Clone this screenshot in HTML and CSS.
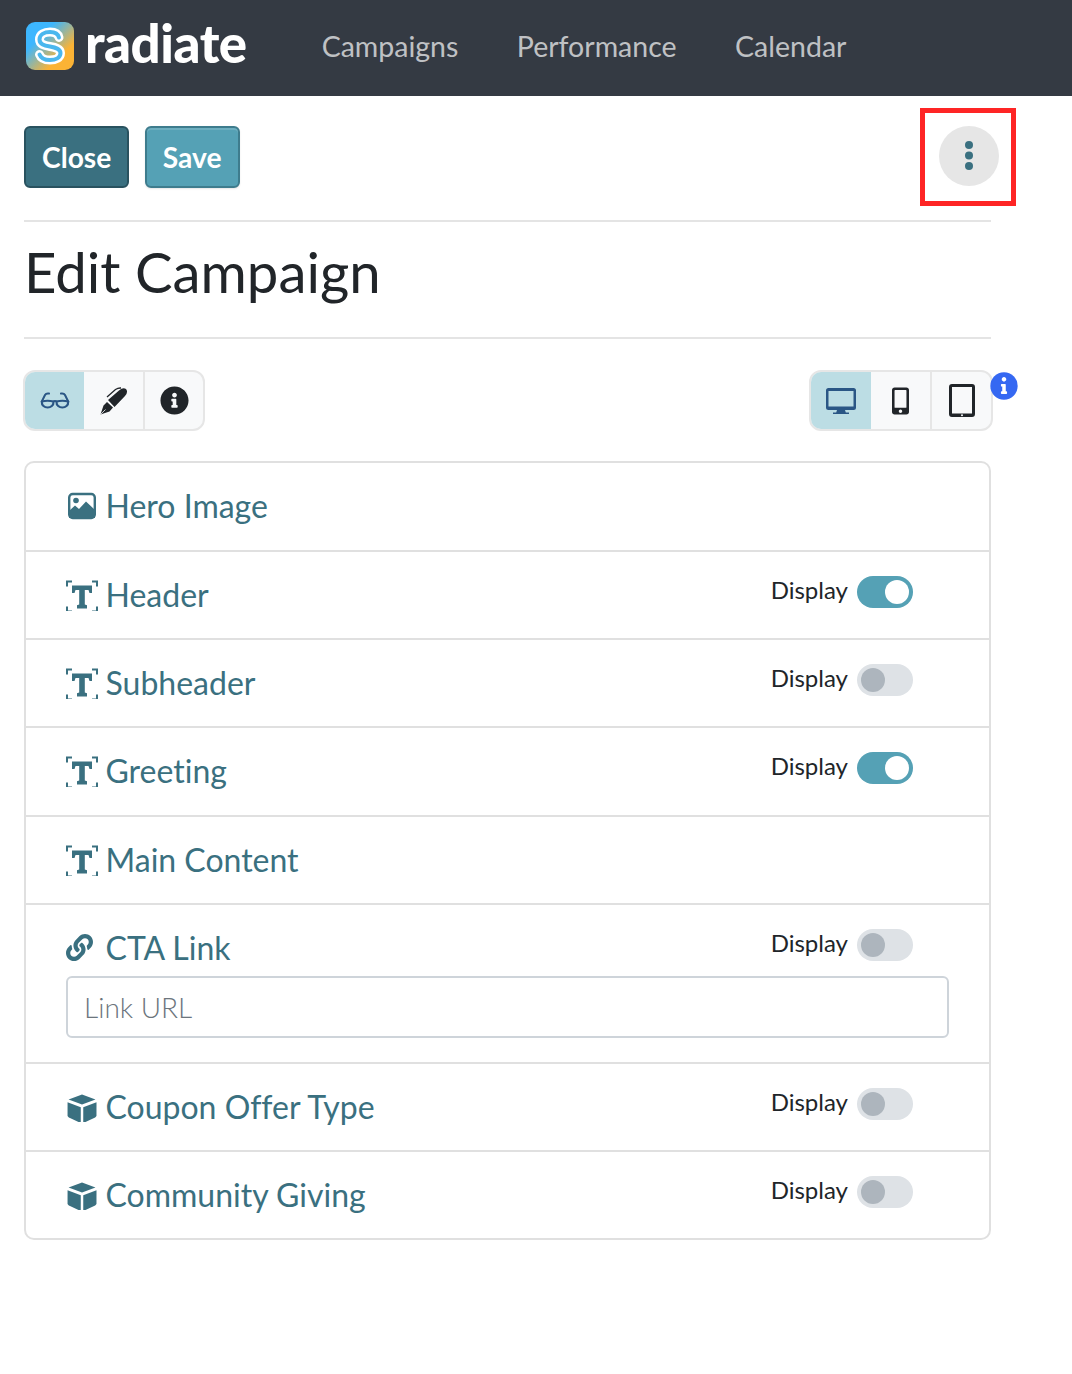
FILE: index.html
```html
<!DOCTYPE html>
<html lang="en">
<head>
    <meta charset="UTF-8">
    <meta name="viewport" content="width=device-width, initial-scale=1.0">
    <title>Edit Campaign</title>
    <link rel="stylesheet" href="styles.css">
</head>
<body>
    <svg class="icon-defs" width="0" height="0">
        <defs>
            <linearGradient id="logoGrad" x1="0" y1="0" x2="1" y2="1">
                <stop offset="0.3" stop-color="#3db6fe"/>
                <stop offset="0.72" stop-color="#fbb335"/>
            </linearGradient>
            <symbol id="icon-text" viewBox="0 -1.500 32 32" overflow="visible">
                <path d="M6 5H26V12.500H23.500L22.500 9.500H18.800V24L21 24.800V28H11V24.800L13.200 24V9.500H9.500L8.500 12.500H6Z" fill="currentColor"/>
                <path d="M1 6V1H6M26 1H31V6M1 26V31H6M26 31H31V26" fill="none" stroke="currentColor" stroke-width="2"/>
            </symbol>
            <symbol id="icon-cube" viewBox="-.5 -2 30 30" overflow="visible">
                <path d="M15 1.500 28 6.300 15 11 2 6.300z" fill="currentColor"/>
                <path d="M1 9 13.800 13.800V29L2.300 23.700Q1 23 1 21.800z" fill="currentColor"/>
                <path d="M29 9 16.200 13.800V29L27.700 23.700Q29 23 29 21.800z" fill="currentColor"/>
            </symbol>
        </defs>
    </svg>

    <nav class="navbar">
        <a class="logo" href="#">
            <svg class="logo-mark" viewBox="0 0 48 48">
                <rect width="48" height="48" rx="9" fill="url(#logoGrad)"/>
                <path d="M33 15.500C32 11.500 28 10 24 10 18.500 10 13.500 12.500 13.500 17.500 13.500 22.500 18.500 23.500 24 24.500 29.500 25.500 34.500 26.500 34.500 31 34.500 36 29.500 38 24 38 19.500 38 15 36.500 13.500 32.500" fill="none" stroke="#fff" stroke-width="9" stroke-linecap="round"/>
                <path d="M33 15.500C32 11.500 28 10 24 10 18.500 10 13.500 12.500 13.500 17.500 13.500 22.500 18.500 23.500 24 24.500 29.500 25.500 34.500 26.500 34.500 31 34.500 36 29.500 38 24 38 19.500 38 15 36.500 13.500 32.500" fill="none" stroke="#4ab7ee" stroke-width="4" stroke-linecap="round"/>
            </svg>
            <span class="logo-text">radiate</span>
        </a>
        <div class="nav-links">
            <a href="#">Campaigns</a>
            <a href="#">Performance</a>
            <a href="#">Calendar</a>
        </div>
    </nav>

    <main class="container">
        <div class="toolbar">
            <div class="toolbar-buttons">
                <button class="btn btn-close">Close</button>
                <button class="btn btn-save">Save</button>
            </div>
            <div class="more-wrap">
                <button class="more-btn" aria-label="More">
                    <svg viewBox="0 0 10 32" width="10" height="32"><circle cx="5" cy="5" r="4"/><circle cx="5" cy="15.500" r="4"/><circle cx="5" cy="26" r="4"/></svg>
                </button>
                <div class="highlight-box"></div>
            </div>
        </div>

        <h1 class="page-title">Edit Campaign</h1>

        <div class="view-controls">
            <div class="btn-group mode-group">
                <button class="group-item active">
                    <svg viewBox="0 0 30 18" width="30" height="18"><path d="M1.800 9.500 5 3Q6 1 9 1.500M28.200 9.500 25 3Q24 1 21 1.500M13.500 9.500Q15 8.500 16.500 9.500" fill="none" stroke="currentColor" stroke-width="2" stroke-linecap="round"/><path d="M1.800 9.500Q7.500 8 13.500 9.500C14 17.500 1.300 17.500 1.800 9.500ZM16.500 9.500Q22.500 8 28.200 9.500C28.700 17.500 16 17.500 16.500 9.500Z" fill="none" stroke="currentColor" stroke-width="2.200" stroke-linejoin="round"/></svg>
                </button>
                <button class="group-item">
                    <svg viewBox="0 0 28 28" width="28" height="28"><path fill="currentColor" d="M8 13 19 3.500Q23 0 26 2 28.500 5 25 9L14.500 20zM.5 27.500 3.500 18.500 7 15 13 20.500 9.500 24.500z"/><path d="M7 10 15.500 2.500Q18 .8 21 1" fill="none" stroke="currentColor" stroke-width="1.300"/><path d="M.8 27.200 5.500 22.500" stroke="#f8f9fa" stroke-width=".8"/></svg>
                </button>
                <button class="group-item">
                    <svg viewBox="0 0 512 512" width="29" height="29"><path fill="currentColor" d="M256 8C119.043 8 8 119.083 8 256c0 136.997 111.043 248 248 248s248-111.003 248-248C504 119.083 392.957 8 256 8zm0 110c23.196 0 42 18.804 42 42s-18.804 42-42 42-42-18.804-42-42 18.804-42 42-42zm56 254c0 6.627-5.373 12-12 12h-88c-6.627 0-12-5.373-12-12v-24c0-6.627 5.373-12 12-12h12v-64h-12c-6.627 0-12-5.373-12-12v-24c0-6.627 5.373-12 12-12h64c6.627 0 12 5.373 12 12v100h12c6.627 0 12 5.373 12 12v24z"/></svg>
                </button>
            </div>
            <div class="device-wrap">
                <div class="btn-group device-group">
                    <button class="group-item active">
                        <svg viewBox="0 0 30 26" width="30" height="26"><path fill="#2a5685" d="M2.500 0h25A2.500 2.500 0 0 1 30 2.500v17a2.500 2.500 0 0 1-2.500 2.500H19l.8 2.500H23V26H7v-1.500h3.200L11 22H2.500A2.500 2.500 0 0 1 0 19.500v-17A2.500 2.500 0 0 1 2.500 0zM2.500 3v15.500h25V3z"/></svg>
                    </button>
                    <button class="group-item">
                        <svg viewBox="0 0 320 512" width="17" height="28"><path fill="currentColor" d="M272 0H48C21.500 0 0 21.500 0 48v416c0 26.500 21.500 48 48 48h224c26.500 0 48-21.500 48-48V48c0-26.500-21.500-48-48-48zM160 480c-17.700 0-32-14.300-32-32s14.300-32 32-32 32 14.300 32 32-14.300 32-32 32zm112-108c0 6.600-5.400 12-12 12H60c-6.600 0-12-5.400-12-12V60c0-6.600 5.400-12 12-12h200c6.600 0 12 5.400 12 12v312z"/></svg>
                    </button>
                    <button class="group-item">
                        <svg viewBox="0 0 26 33" width="26" height="33"><path fill="currentColor" d="M3 0h20a3 3 0 0 1 3 3v27a3 3 0 0 1-3 3H3a3 3 0 0 1-3-3V3a3 3 0 0 1 3-3zM3 3v26.500h20V3zM13 30.200a1 1 0 1 0 0 2 1 1 0 0 0 0-2z"/></svg>
                    </button>
                </div>
                <svg class="info-badge" viewBox="0 0 512 512" width="28" height="28"><circle cx="256" cy="256" r="250" fill="#3568f2"/><path fill="#fff" d="M256 92c23.196 0 42 18.804 42 42s-18.804 42-42 42-42-18.804-42-42 18.804-42 42-42zm56 296c0 6.627-5.373 12-12 12h-88c-6.627 0-12-5.373-12-12v-24c0-6.627 5.373-12 12-12h12v-86h-12c-6.627 0-12-5.373-12-12v-24c0-6.627 5.373-12 12-12h64c6.627 0 12 5.373 12 12v122h12c6.627 0 12 5.373 12 12v24z"/></svg>
            </div>
        </div>

        <section class="sections">
            <div class="section-row">
                <div class="section-label">
                    <span class="icon-slot"><svg viewBox="-1 0 30 30" width="30" height="30"><rect x="2.200" y="3" width="25.600" height="24" rx="3.500" fill="none" stroke="currentColor" stroke-width="2.400"/><circle cx="9" cy="9.500" r="2.800" fill="currentColor"/><path d="M2 27V20L8 14.500 12 18 19 10.500 28 19V27z" fill="currentColor"/></svg></span>
                    <span>Hero Image</span>
                </div>
            </div>
            <div class="section-row">
                <div class="section-label">
                    <span class="icon-slot"><svg width="32" height="32"><use href="#icon-text"/></svg></span>
                    <span>Header</span>
                </div>
                <label class="display-toggle">Display <span class="switch on"></span></label>
            </div>
            <div class="section-row">
                <div class="section-label">
                    <span class="icon-slot"><svg width="32" height="32"><use href="#icon-text"/></svg></span>
                    <span>Subheader</span>
                </div>
                <label class="display-toggle">Display <span class="switch"></span></label>
            </div>
            <div class="section-row">
                <div class="section-label">
                    <span class="icon-slot"><svg width="32" height="32"><use href="#icon-text"/></svg></span>
                    <span>Greeting</span>
                </div>
                <label class="display-toggle">Display <span class="switch on"></span></label>
            </div>
            <div class="section-row">
                <div class="section-label">
                    <span class="icon-slot"><svg width="32" height="32"><use href="#icon-text"/></svg></span>
                    <span>Main Content</span>
                </div>
            </div>
            <div class="section-row section-row-link">
                <div class="section-head">
                    <div class="section-label">
                        <span class="icon-slot"><svg viewBox="0 0 512 512" width="27" height="27"><path fill="currentColor" d="M326.612 185.391c59.747 59.809 58.927 155.698.36 214.590-.11.12-.24.25-.36.37l-67.200 67.200c-59.270 59.270-155.699 59.262-214.960 0-59.270-59.260-59.270-155.700 0-214.960l37.106-37.106c9.840-9.840 26.786-3.300 27.294 10.606.648 17.722 3.826 35.527 9.690 52.721 1.986 5.822.567 12.262-3.783 16.612l-13.087 13.087c-28.026 28.026-28.905 73.660-1.155 101.960 28.024 28.579 74.086 28.749 102.325.51l67.200-67.190c28.191-28.191 28.073-73.757 0-101.830-3.701-3.694-7.429-6.564-10.341-8.569a16.037 16.037 0 0 1-6.947-12.606c-.396-10.567 3.348-21.456 11.698-29.806l21.054-21.055c5.521-5.521 14.182-6.199 20.584-1.731a152.482 152.482 0 0 1 20.522 17.197zM467.547 44.449c-59.261-59.262-155.690-59.270-214.960 0l-67.200 67.200c-.12.12-.25.25-.36.37-58.566 58.892-59.387 154.781.36 214.590a152.454 152.454 0 0 0 20.521 17.196c6.402 4.468 15.064 3.789 20.584-1.731l21.054-21.055c8.350-8.350 12.094-19.239 11.698-29.806a16.037 16.037 0 0 0-6.947-12.606c-2.912-2.005-6.640-4.875-10.341-8.569-28.073-28.073-28.191-73.639 0-101.830l67.200-67.190c28.239-28.239 74.300-28.069 102.325.51 27.750 28.300 26.872 73.934-1.155 101.960l-13.087 13.087c-4.350 4.350-5.769 10.790-3.783 16.612 5.864 17.194 9.042 34.999 9.690 52.721.509 13.906 17.454 20.446 27.294 10.606l37.106-37.106c59.271-59.259 59.271-155.699.001-214.959z"/></svg></span>
                        <span>CTA Link</span>
                    </div>
                    <label class="display-toggle">Display <span class="switch"></span></label>
                </div>
                <input class="link-input" type="text" placeholder="Link URL">
            </div>
            <div class="section-row">
                <div class="section-label">
                    <span class="icon-slot"><svg width="31" height="31"><use href="#icon-cube"/></svg></span>
                    <span>Coupon Offer Type</span>
                </div>
                <label class="display-toggle">Display <span class="switch"></span></label>
            </div>
            <div class="section-row">
                <div class="section-label">
                    <span class="icon-slot"><svg width="31" height="31"><use href="#icon-cube"/></svg></span>
                    <span>Community Giving</span>
                </div>
                <label class="display-toggle">Display <span class="switch"></span></label>
            </div>
        </section>
    </main>
</body>
</html>
```

FILE: styles.css
```css
/* Reset */
* {
    margin: 0;
    padding: 0;
    box-sizing: border-box;
}

body {
    font-family: Lato, "Open Sans", sans-serif;
    font-variant-ligatures: none;
    background-color: #fff;
    color: #212529;
    font-size: 24px;
}

.icon-defs {
    position: absolute;
}

.navbar {
    height: 96px;
    background-color: #343a43;
    display: flex;
    align-items: center;
    padding: 0 0 4px 26px;
}

.logo {
    display: flex;
    align-items: center;
    gap: 11px;
    text-decoration: none;
    color: #fff;
}

.logo-mark {
    width: 48px;
    height: 48px;
}

.logo-text {
    font-size: 52.8px;
    font-weight: 900;
    letter-spacing: -0.5px;
    line-height: 48px;
    padding-bottom: 6px;
}

.nav-links {
    display: flex;
    gap: 58.5px;
    margin-left: 75px;
}

.nav-links a {
    color: rgba(255, 255, 255, 0.7);
    font-size: 28.5px;
    text-decoration: none;
}

.container {
    width: 991px;
    padding: 30px 0 0 24px;
}

.toolbar {
    display: flex;
    justify-content: space-between;
    align-items: flex-start;
    padding-bottom: 32px;
    border-bottom: 2px solid #e4e4e4;
}

.toolbar-buttons {
    display: flex;
    gap: 15.5px;
}

.btn {
    height: 62px;
    padding: 0 16px;
    font-family: inherit;
    font-size: 28.2px;
    font-weight: 700;
    font-variant-ligatures: none;
    color: #fff;
    border-radius: 6px;
    cursor: pointer;
}

.btn-close {
    background-color: #3a7080;
    border: 2px solid #29525f;
}

.btn-save {
    background-color: #55a1b5;
    border: 2px solid #3e7c8d;
    box-shadow: inset 0 2px 0 rgba(255, 255, 255, 0.15), 0 1px 2px rgba(0, 0, 0, 0.1);
}

.more-wrap {
    position: relative;
    margin-right: -8px;
}

.more-btn {
    width: 60px;
    height: 60px;
    border: none;
    border-radius: 50%;
    background-color: #e6e6e6;
    display: flex;
    align-items: center;
    justify-content: center;
}

.more-btn circle {
    fill: #3a7080;
}

/* annotation drawn over the page */
.highlight-box {
    position: absolute;
    left: -19px;
    top: -18px;
    width: 96px;
    height: 98px;
    border: 5px solid #fe2525;
}

.page-title {
    font-size: 56.3px;
    font-weight: 400;
    line-height: 67px;
    padding: 16px 0 32px 0;
    border-bottom: 2px solid #e4e4e4;
}

.view-controls {
    display: flex;
    justify-content: space-between;
    margin-top: 31px;
}

.device-wrap {
    position: relative;
}

.btn-group {
    display: flex;
    height: 61px;
    border: 2px solid #e6e6e6;
    border-radius: 12px;
    background-color: #f8f9fa;
    overflow: hidden;
}

.mode-group {
    margin-left: -1px;
}

.device-group {
    margin-right: -2px;
}

.group-item {
    width: 59px;
    border: none;
    background: none;
    color: #212529;
    display: flex;
    align-items: center;
    justify-content: center;
}

.group-item:last-child {
    width: 60px;
}

.device-group .group-item:first-child {
    width: 60px;
}

.device-group .group-item:last-child {
    width: 61px;
}

.group-item + .group-item {
    border-left: 2px solid #e6e6e6;
}

.group-item.active {
    background-color: #bcdde4;
    color: #2a5685;
}

.group-item.active + .group-item {
    border-left: none;
}

.info-badge {
    position: absolute;
    right: -27px;
    top: 2px;
}

.sections {
    margin-top: 30px;
    border: 2px solid #e0e0e0;
    border-radius: 10px;
}

.section-row {
    display: flex;
    justify-content: space-between;
    align-items: flex-start;
    padding: 19px 76px 18px 40px;
    border-bottom: 2px solid #e0e0e0;
    height: 88.2px;
}

.section-row:first-child {
    height: 89px;
}

.section-row:last-child {
    border-bottom: none;
    height: 85.6px;
}

.section-row-link {
    display: block;
    height: 159px;
    padding-right: 40px;
}

.section-head {
    display: flex;
    justify-content: space-between;
    align-items: flex-start;
    padding-right: 36px;
}

.section-label {
    display: flex;
    align-items: center;
    color: #3a7080;
    font-size: 32px;
    line-height: 48px;
}

.icon-slot {
    display: flex;
    align-items: center;
    width: 39.5px;
    flex: none;
}

.display-toggle {
    display: flex;
    align-items: center;
    gap: 9px;
    line-height: 36px;
    margin-top: 1px;
}

.switch {
    position: relative;
    display: block;
    width: 56px;
    height: 32px;
    margin-top: 4px;
    border-radius: 16px;
    background-color: #dee2e6;
}

.switch::after {
    content: "";
    position: absolute;
    left: 4px;
    top: 4px;
    width: 24px;
    height: 24px;
    border-radius: 50%;
    background-color: #adb5bd;
}

.switch.on {
    background-color: #55a1b5;
}

.switch.on::after {
    left: 28px;
    background-color: #fff;
}

.link-input {
    display: block;
    width: 100%;
    height: 62px;
    margin-top: 4px;
    padding: 0 16px;
    font-family: inherit;
    font-size: 28px;
    font-weight: 300;
    color: #495057;
    border: 2px solid #ced4da;
    border-radius: 6px;
}

.link-input::placeholder {
    color: #6c757d;
}
```
